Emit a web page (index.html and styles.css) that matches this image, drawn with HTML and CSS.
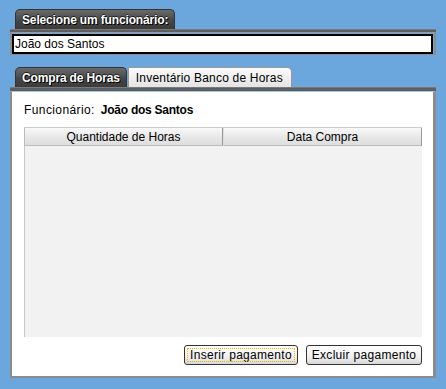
FILE: index.html
```html
<!DOCTYPE html>
<html>
<head>
<meta charset="utf-8">
<link rel="stylesheet" href="styles.css">
</head>
<body>
<div class="page">
  <div class="group">
    <div class="tabs">
      <div class="tab dark">Selecione um funcionário:</div>
    </div>
    <div class="bar"></div>
    <div class="input-wrap">
      <div class="input">João dos Santos</div>
    </div>
  </div>

  <div class="group second">
    <div class="tabs">
      <div class="tab dark">Compra de Horas</div>
      <div class="tab light">Inventário Banco de Horas</div>
    </div>
    <div class="bar thick"></div>
    <div class="panel">
      <div class="emp"><span class="lbl">Funcionário:</span><span class="val">João dos Santos</span></div>
      <div class="grid">
        <div class="head">
          <div class="col">Quantidade de Horas</div>
          <div class="col">Data Compra</div>
        </div>
        <div class="body"></div>
      </div>
      <div class="actions">
        <button class="btn focus ins">Inserir pagamento</button>
        <button class="btn exc">Excluir pagamento</button>
      </div>
    </div>
  </div>
</div>
</body>
</html>
```
FILE: styles.css
```css
html, body {
  margin: 0;
  padding: 0;
  background: #6ba7dd;
  font-family: "Liberation Sans", Arial, sans-serif;
  font-size: 12px;
  color: #000;
}
.page {
  padding: 9px 10px 0 10px;
  width: 426px;
}
.group { display: flex; flex-direction: column; }
.group.second { margin-top: 12px; }
.tabs {
  display: flex;
  align-items: flex-end;
  padding-left: 5px;
  height: 20px;
}
.tab {
  box-sizing: border-box;
  display: flex;
  align-items: center;
  border-radius: 5px 5px 0 0;
  white-space: nowrap;
}
.tab.dark {
  background: linear-gradient(#6a6a6a, #444 60%, #3c3c3c);
  border: 1px solid #333;
  border-bottom: none;
  color: #fff;
  font-weight: bold;
  letter-spacing: -0.15px;
  text-shadow: 1px 1px 0 #000, -1px 0 0 #222, 0 -1px 0 #222;
  height: 20px;
  padding: 0 6px 0 6px;
}
.tab.light {
  background: linear-gradient(#fafafa, #e4e4e4);
  border: 1px solid #999;
  border-bottom: none;
  border-radius: 0 5px 0 0;
  height: 20px;
  margin-left: 1px;
  padding: 0 8px 0 7px;
  letter-spacing: 0.2px;
}
.bar {
  height: 2px;
  background: #5e5e5e;
  border-top: 1px solid #7a7a7a;
}
.bar.thick { height: 3px; }
.input-wrap {
  border: 2px solid #8c8c8c;
  border-top: 1px solid #9a9a9a;
  border-bottom: 1px solid #8c8c8c;
  padding: 1px 1px 0 0;
  background: #6ba7dd;
}
.input {
  height: 16px;
  border: 2px solid #000;
  background: #fff;
  padding-left: 1px;
  line-height: 17px;
  font-size: 12px;
}
.panel {
  background: #fff;
  border-left: 2px solid #8c8c8c;
  border-right: 3px solid #8c8c8c;
  border-bottom: 2px solid #8c8c8c;
  border-top: 1px solid #9ec3e6;
  padding: 11px 11px 11px 12px;
  display: flex;
  flex-direction: column;
}
.emp {
  height: 14px;
  display: flex;
  align-items: baseline;
  gap: 6px;
}
.emp .lbl { font-size: 12px; letter-spacing: 0.4px; }
.emp .val { font-weight: bold; font-size: 12px; letter-spacing: -0.25px; }
.grid {
  margin-top: 10px;
  display: flex;
  flex-direction: column;
  height: 210px;
}
.head {
  display: flex;
  height: 19px;
  box-sizing: border-box;
  border-top: 1px solid #ccc;
}
.col {
  flex: 1;
  box-sizing: border-box;
  display: flex;
  align-items: center;
  justify-content: center;
  background: linear-gradient(#f8f8f8, #e6e6e6 60%, #dedede);
  border-left: 1px solid #bbb;
  border-right: 1px solid #999;
  border-bottom: 1px solid #bbb;
}
.col + .col { border-left: 1px solid #ddd; }
.body {
  flex: 1;
  background: #f2f2f2;
  border-left: 1px solid #c8c8c8;
}
.actions {
  margin-top: 8px;
  display: flex;
  justify-content: flex-end;
  gap: 8px;
}
.btn {
  font-family: "Liberation Sans", Arial, sans-serif;
  font-size: 12px;
  letter-spacing: 0.3px;
  height: 20px;
  padding: 0;
  border: 1px solid #333;
  border-radius: 3px;
  background: linear-gradient(#fff, #f2f2f2 55%, #d8d8d8);
  color: #000;
}
.btn.ins { width: 114px; }
.btn.exc { width: 116px; }
.btn.focus {
  outline: 1px dotted #f0b400;
  outline-offset: -4px;
}
```
